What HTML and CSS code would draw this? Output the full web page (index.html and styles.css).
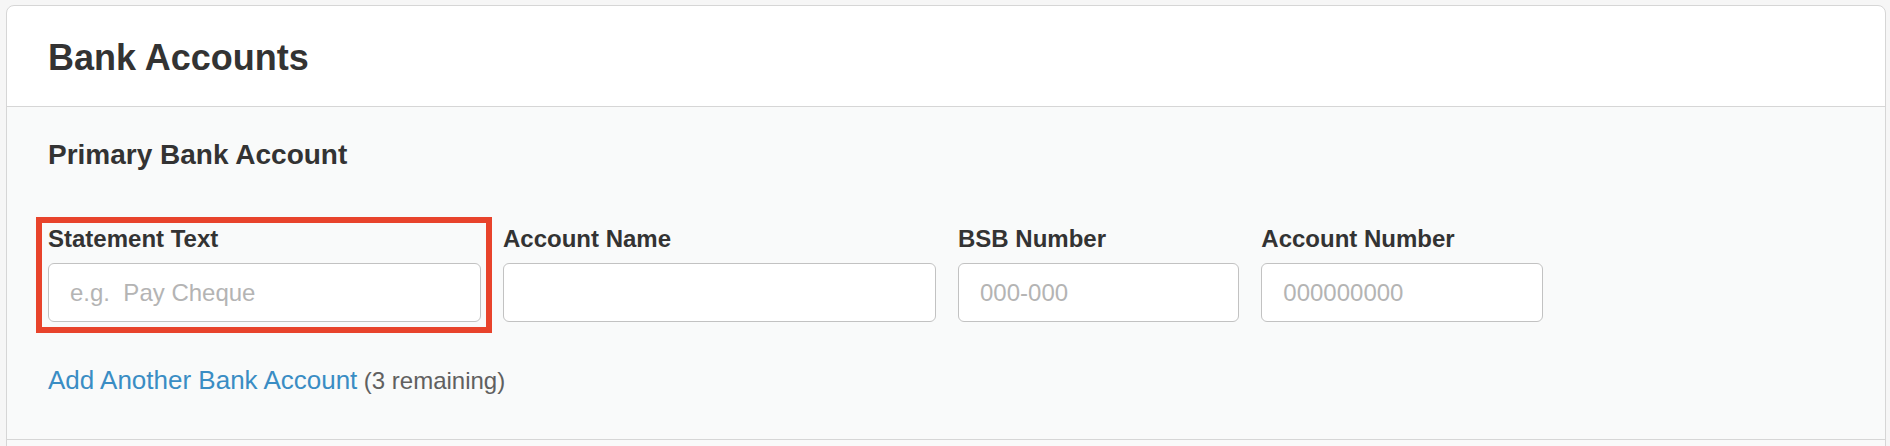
FILE: index.html
```html
<html lang="en">
<head>
    <meta charset="UTF-8">
    <meta name="viewport" content="width=device-width, initial-scale=1.0">
    <title>Bank Accounts</title>
    <link rel="stylesheet" href="styles.css">
</head>
<body>

    <div class="panel">
        <div class="panel-header">
            <h2>Bank Accounts</h2>
        </div>

        <div class="panel-body">
            <h3>Primary Bank Account</h3>

            <!-- Поля основного счёта -->
            <div class="bank-row">
                <div class="field span-3 highlighted">
                    <label for="statementText">Statement Text</label>
                    <input type="text" id="statementText" class="input-field" placeholder="e.g.&nbsp; Pay Cheque">
                </div>
                <div class="field span-3">
                    <label for="accountName">Account Name</label>
                    <input type="text" id="accountName" class="input-field">
                </div>
                <div class="field span-2">
                    <label for="bsbNumber">BSB Number</label>
                    <input type="text" id="bsbNumber" class="input-field" placeholder="000-000">
                </div>
                <div class="field span-2">
                    <label for="accountNumber">Account Number</label>
                    <input type="text" id="accountNumber" class="input-field" placeholder="000000000">
                </div>
            </div>

            <p class="add-account">
                <a href="#" class="add-link">Add Another Bank Account</a> <span class="remaining">(3 remaining)</span>
            </p>
        </div>

        <div class="panel-body next-section"></div>
    </div>

</body>
</html>
```

FILE: styles.css
```css
body {
    margin: 0;
    padding: 5px 4px 0 6px;
    background-color: #f6f6f6;
    font-family: 'Liberation Sans', Arial, sans-serif;
    color: #333;
}

.panel {
    background-color: #fff;
    border: 1px solid #d6d6d6;
    border-radius: 8px;
    overflow: hidden;
}

.panel-header {
    padding: 31px 39px 28px 41px;
    border-bottom: 1px solid #d6d6d6;
}

.panel-header h2 {
    margin: 0;
    font-size: 36px;
    line-height: 1.15;
    font-weight: bold;
    color: #333;
}

.panel-body {
    background-color: #f9fafa;
    padding: 32px 39px 43px 41px;
    border-bottom: 1px solid #d6d6d6;
}

.panel-body h3 {
    margin: 0 0 53px;
    font-size: 28px;
    line-height: 1.15;
    font-weight: bold;
    color: #333;
}

/* Сетка полей: 12 колонок */
.bank-row {
    display: grid;
    grid-template-columns: repeat(12, 1fr);
    column-gap: 22px;
}

.span-3 {
    grid-column: span 3;
}

.span-2 {
    grid-column: span 2;
}

.field {
    position: relative;
    display: flex;
    flex-direction: column;
}

.field label {
    font-size: 24px;
    line-height: 1.15;
    font-weight: bold;
    color: #333;
    margin-bottom: 11px;
}

/* Красная рамка-выделение поверх поля */
.highlighted::after {
    content: "";
    position: absolute;
    top: -8px;
    left: -12px;
    right: -11px;
    bottom: -11px;
    border: 6px solid #e8432b;
    pointer-events: none;
}

.input-field {
    width: 100%;
    height: 59px;
    padding: 0 21px;
    border: 1px solid #c2c2c2;
    border-radius: 6px;
    background-color: #fff;
    font-family: 'Liberation Sans', Arial, sans-serif;
    font-size: 24px;
    color: #333;
    box-sizing: border-box;
}

.input-field::placeholder {
    color: #b4b4b4;
}

.input-field:focus {
    outline: none;
}

.add-account {
    margin: 44px 0 0;
    line-height: 1.15;
}

.add-link {
    font-size: 26px;
    color: #3a8dc4;
    text-decoration: none;
}

.add-link:hover {
    text-decoration: underline;
}

.remaining {
    font-size: 24px;
    color: #606060;
    margin-left: 2px;
}

.next-section {
    height: 60px;
    padding: 0;
    border-bottom: none;
}
```
